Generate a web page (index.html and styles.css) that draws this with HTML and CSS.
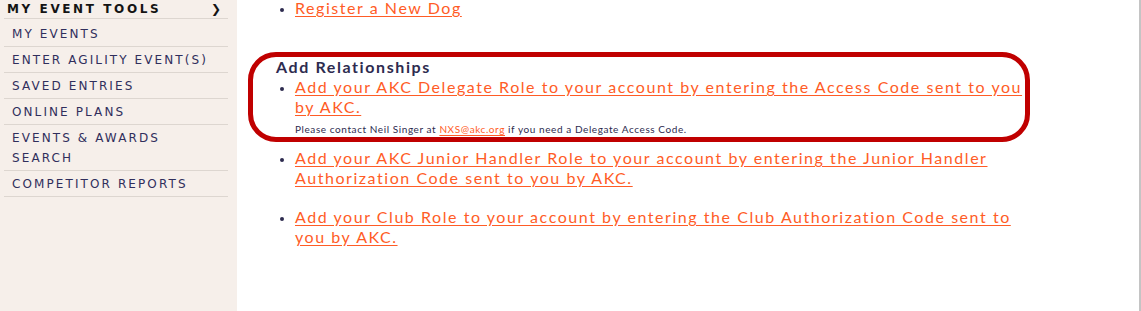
FILE: index.html
```html
<!DOCTYPE html>
<html lang="en">
<head>
<meta charset="utf-8">
<title>My Event Tools</title>
<link rel="stylesheet" href="styles.css">
</head>
<body>
<div class="page">
  <aside class="sidebar">
    <div class="side-head"><span>My Event Tools</span><span class="chev">&#10095;</span></div>
    <ul class="side-menu">
      <li><a href="#">My Events</a></li>
      <li><a href="#">Enter Agility Event(s)</a></li>
      <li><a href="#">Saved Entries</a></li>
      <li><a href="#">Online Plans</a></li>
      <li><a href="#">Events &amp; Awards Search</a></li>
      <li><a href="#">Competitor Reports</a></li>
    </ul>
  </aside>
  <main class="content">
    <ul class="links first">
      <li><a href="#">Register a New Dog</a></li>
    </ul>
    <section class="relations">
      <h3 class="rel-title">Add Relationships</h3>
      <ul class="links">
        <li><a href="#">Add your AKC Delegate Role to your account by entering the Access Code sent to you by AKC.</a>
          <p class="note">Please contact Neil Singer at <a href="#">NXS@akc.org</a> if you need a Delegate Access Code.</p>
        </li>
      </ul>
    </section>
    <ul class="links more">
      <li><a href="#">Add your AKC Junior Handler Role to your account by entering the Junior Handler Authorization Code sent to you by AKC.</a></li>
      <li><a href="#">Add your Club Role to your account by entering the Club Authorization Code sent to you by AKC.</a></li>
    </ul>
  </main>
</div>
</body>
</html>
```
FILE: styles.css
```css
html, body {
  margin: 0;
  padding: 0;
  background: #ffffff;
}
body {
  width: 1141px;
  height: 311px;
  overflow: hidden;
}
.page {
  display: flex;
  height: 311px;
  border-right: 2px solid #c4c4c4;
  box-sizing: border-box;
  width: 1141px;
}
.sidebar {
  width: 237px;
  flex: none;
  background: #f6efea;
  font-family: "DejaVu Sans", sans-serif;
  text-transform: uppercase;
  padding: 0 9px 0 4px;
  box-sizing: border-box;
}
.side-head {
  display: flex;
  justify-content: space-between;
  align-items: center;
  height: 19px;
  margin-top: -1px;
  padding: 0 7px 0 3px;
  border-bottom: 1px solid #ddd6d0;
  font-size: 12px;
  font-weight: bold;
  letter-spacing: 2.6px;
  color: #141414;
}
.chev {
  font-size: 12px;
  letter-spacing: 0;
}
.side-menu {
  list-style: none;
  margin: 0;
  padding: 0;
}
.side-menu li {
  border-bottom: 1px solid #ddd6d0;
  padding: 3px 12px 2px 8px;
}
.side-menu li:first-child {
  padding-top: 5px;
}
.side-menu a {
  display: block;
  line-height: 20px;
  font-size: 12px;
  letter-spacing: 2.1px;
  color: #302e5c;
  text-decoration: none;
}
.content {
  flex: none;
  width: 752px;
  padding-left: 39px;
  font-family: Lato, "Liberation Sans", sans-serif;
  color: #2d2b4f;
}
.links {
  margin: 0;
  padding-left: 19px;
  list-style: disc;
}
.links li {
  font-size: 16px;
  line-height: 20px;
  letter-spacing: 1.55px;
}
.links li::marker {
  color: #2d2b4f;
  font-size: 12px;
}
.links a {
  color: #ff5c26;
  text-decoration: underline;
  text-underline-offset: 2px;
}
.first {
  margin-top: -2px;
}
.relations {
  margin: 34px -2px 6px -28px;
  padding: 0 0 0 23px;
  border: 5px solid #c00000;
  border-radius: 28px;
  height: 80px;
}
.rel-title {
  margin: 0;
  font-size: 16px;
  line-height: 20px;
  font-weight: bold;
  letter-spacing: 1.6px;
  color: #2d2b4f;
}
.note {
  margin: 5px 0 0;
  font-size: 10px;
  line-height: 14px;
  letter-spacing: 0.58px;
  color: #2d2b4f;
}
.more li {
  margin-bottom: 19px;
}
```
